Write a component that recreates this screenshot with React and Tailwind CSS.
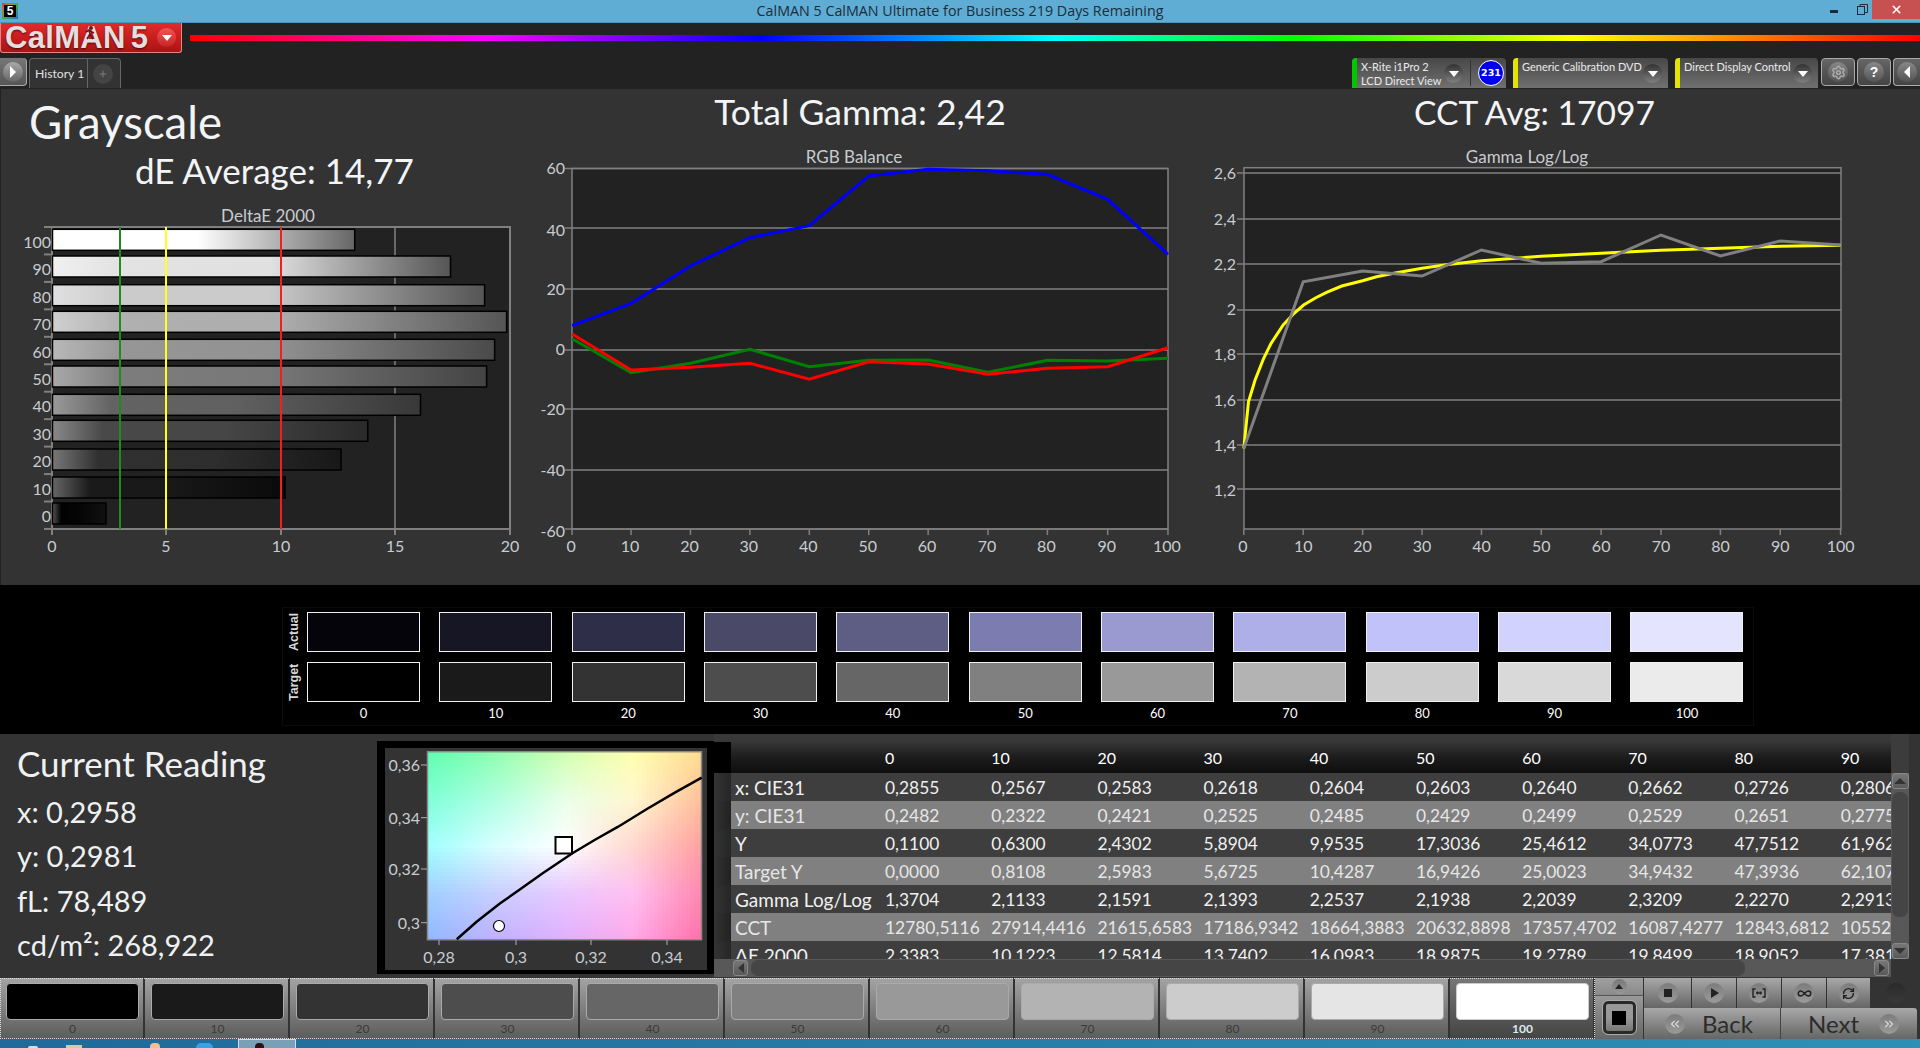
import React from "react";
import { Settings, Infinity as InfinityIcon, RefreshCw, ChevronsLeft, ChevronsRight, Plus, X } from "lucide-react";

const poly = (arr) => arr.map((p) => p.join(",")).join(" ");

const Caret = ({ className = "" }) => (
  <span className={"w-0 h-0 border-l-[5px] border-r-[5px] border-t-[6px] border-l-transparent border-r-transparent border-t-white " + className} />
);

const DropCircle = () => (
  <span className="w-[19px] h-[19px] rounded-full bg-linear-to-b from-[#333] to-[#808080] flex items-center justify-center shrink-0">
    <Caret />
  </span>
);

const TitleBar = () => (
  <div className="h-[23px] bg-[#5fadd5] border-b border-[#4b93b8] flex items-start relative shrink-0">
    <div className="absolute left-[2px] top-[3px] w-[16px] h-[16px] p-[2px] bg-linear-to-br from-[#d33] via-[#4a4] to-[#36c]">
      <div className="w-full h-full bg-black text-white text-[12px] leading-[12px] font-bold text-center font-['Liberation_Sans',sans-serif]">5</div>
    </div>
    <div className="flex-1 text-center text-[14.3px] leading-[22px] text-[#1c2c38] font-['Open_Sans',sans-serif]">
      CalMAN 5 CalMAN Ultimate for Business 219 Days Remaining
    </div>
    <div className="absolute right-[82px] top-[10px] w-[8px] h-[3px] bg-[#1c2c38]" />
    <svg className="absolute right-[52px] top-[4px]" width="11" height="11" viewBox="0 0 11 11" fill="none" stroke="#1c2c38">
      <rect x="0.5" y="2.5" width="7" height="8" />
      <path d="M3 2.5V0.5H10.5V8.5H8" />
    </svg>
    <div className="absolute right-0 top-0 w-[48px] h-[19px] bg-[#c75050] flex items-center justify-center">
      <X size={13} color="#fff" strokeWidth={3} />
    </div>
  </div>
);

const RoundBtn = ({ children }) => (
  <span className="w-[20px] h-[20px] rounded-full bg-linear-to-b from-[#7c7c7c] to-[#9a9a9a] flex items-center justify-center shrink-0">{children}</span>
);

const Header = () => (
  <div className="h-[66px] bg-[#222222] shrink-0 flex flex-col">
    <div className="h-[35px] flex items-start">
      <div className="relative w-[182px] h-[30px] rounded-b-[3px] bg-linear-to-b from-[#e22a2a] to-[#ad1212] border border-t-0 border-[#d88] flex items-center pl-[4px] shrink-0">
        <span className="text-[31px] leading-[28px] font-bold text-[#e4dede] tracking-[0.3px] [text-shadow:0_1px_2px_#0009] font-['Liberation_Sans',sans-serif]">CalMAN</span>
        <span className="ml-[5px] text-[31px] leading-[28px] font-bold text-[#e4dede] [text-shadow:0_1px_2px_#0009] font-['Liberation_Sans',sans-serif]">5</span>
        <svg className="absolute left-[84px] top-[3px]" width="10" height="14" viewBox="0 0 10 14" fill="none" stroke="#7a1010" strokeWidth="1.6">
          <circle cx="6" cy="2" r="1.2" fill="#7a1010" />
          <path d="M1 6L4 4L7 6L9 7M4 4L5 8L2 13M5 8L8 13" />
        </svg>
        <span className="absolute left-[156px] top-[5px] w-[19px] h-[19px] rounded-full bg-linear-to-b from-[#ee5555] to-[#c52222] flex items-center justify-center">
          <Caret />
        </span>
      </div>
      <div className="ml-[8px] mt-[12px] flex-1 h-[6px] bg-[linear-gradient(90deg,#ff0000_0%,#ff00ff_17%,#0000ff_33%,#00ffff_50%,#00ff00_64%,#ffff00_80%,#ff0000_100%)]" />
    </div>
    <div className="h-[31px] flex items-start justify-between">
      <div className="flex">
        <div className="w-[27px] h-[28px] rounded-r-[4px] bg-linear-to-b from-[#777] to-[#555] border-r border-b border-[#aaa] flex items-center justify-center">
          <span className="w-[20px] h-[20px] rounded-full bg-linear-to-b from-[#aaa] to-[#666] flex items-center justify-center">
            <span className="w-0 h-0 border-t-[6px] border-b-[6px] border-l-[6px] border-t-transparent border-b-transparent border-l-white" />
          </span>
        </div>
        <div className="ml-[2px] w-[92px] h-[30px] rounded-t-[4px] bg-[#333] border border-b-0 border-[#666] flex items-center">
          <div className="w-[58px] h-full text-[12.2px] pl-[5px] leading-[30px] text-[#e0e0e0] border-r border-[#666] whitespace-nowrap font-[Lato,sans-serif]">History 1</div>
          <span className="ml-[5px] w-[20px] h-[20px] rounded-full bg-[#444] flex items-center justify-center">
            <Plus size={10} color="#888" />
          </span>
        </div>
      </div>
      <div className="flex items-start">
        <div className="w-[154px] h-[30px] rounded-t-[4px] bg-linear-to-b from-[#484848] to-[#707070] flex overflow-hidden">
          <div className="w-[5px] h-full bg-[#00c800] mr-[4px]" />
          <div className="w-[83px] text-[11px] leading-[14px] pt-[2px] text-[#eaeaea] whitespace-nowrap font-[Lato,sans-serif]">
            <div>X-Rite i1Pro 2</div>
            <div>LCD Direct View</div>
          </div>
          <div className="w-[22px] pt-[6px]"><DropCircle /></div>
          <div className="w-px h-[26px] mt-[2px] bg-[#333] ml-[4px]" />
          <div className="ml-[7px] mt-[2px] w-[26px] h-[26px] rounded-full bg-[#0000f0] border border-white text-white text-[9.5px] font-bold leading-[24px] text-center font-['DejaVu_Sans',sans-serif]">231</div>
        </div>
        <div className="ml-[7px] w-[155px] h-[30px] rounded-t-[4px] bg-linear-to-b from-[#484848] to-[#707070] flex overflow-hidden">
          <div className="w-[5px] h-full bg-[#e4e400] mr-[4px]" />
          <div className="w-[121px] text-[11px] leading-[14px] pt-[2px] text-[#eaeaea] whitespace-nowrap font-[Lato,sans-serif]">Generic Calibration DVD</div>
          <div className="pt-[6px]"><DropCircle /></div>
        </div>
        <div className="ml-[7px] w-[143px] h-[30px] rounded-t-[4px] bg-linear-to-b from-[#484848] to-[#707070] flex overflow-hidden">
          <div className="w-[5px] h-full bg-[#e4e400] mr-[4px]" />
          <div className="w-[109px] text-[11px] leading-[14px] pt-[2px] text-[#eaeaea] whitespace-nowrap font-[Lato,sans-serif]">Direct Display Control</div>
          <div className="pt-[6px]"><DropCircle /></div>
        </div>
        <div className="ml-[3px] w-[34px] h-[28px] rounded-[4px] border border-[#aaa] bg-linear-to-b from-[#666] to-[#444] flex items-center justify-center">
          <span className="w-[20px] h-[20px] rounded-full bg-linear-to-b from-[#888] to-[#555] flex items-center justify-center"><Settings size={15} color="#aaa" strokeWidth={2.4} /></span>
        </div>
        <div className="ml-[2px] w-[34px] h-[28px] rounded-[4px] border border-[#aaa] bg-linear-to-b from-[#666] to-[#444] flex items-center justify-center">
          <span className="w-[20px] h-[20px] rounded-full bg-linear-to-b from-[#888] to-[#555] text-white font-bold text-[14px] leading-[20px] text-center font-['Liberation_Sans',sans-serif]">?</span>
        </div>
        <div className="ml-[2px] w-[27px] h-[28px] rounded-l-[4px] border border-r-0 border-[#aaa] bg-linear-to-b from-[#666] to-[#444] flex items-center justify-center">
          <span className="w-[20px] h-[20px] rounded-full bg-linear-to-b from-[#888] to-[#555] flex items-center justify-center">
            <span className="w-0 h-0 border-t-[6px] border-b-[6px] border-r-[6px] border-t-transparent border-b-transparent border-r-white" />
          </span>
        </div>
      </div>
    </div>
  </div>
);

const LBL = "text-[16px] fill-[#c8ccd0]";
const TTL = "text-[17px] fill-[#c8ccd0]";
const LN = "#808080";

const bars = [
  { l: "100", y: 29.3, end: 354.7, s: ["#ffffff", "#ffffff", "#ffffff", "#666666"], m: 0.48 },
  { l: "90", y: 56, end: 450.5, s: ["#f0f0f0", "#e3e3e3", "#e0e0e0", "#555555"], m: 0.55 },
  { l: "80", y: 84.7, end: 484.6, s: ["#e0e0e0", "#cbcbcb", "#cbcbcb", "#555555"], m: 0.5 },
  { l: "70", y: 111.3, end: 506.6, s: ["#cfcfcf", "#b0b0b0", "#adadad", "#555555"], m: 0.5 },
  { l: "60", y: 139.3, end: 494.6, s: ["#b8b8b8", "#969696", "#929292", "#4a4a4a"], m: 0.5 },
  { l: "50", y: 166, end: 486.6, s: ["#a8a8a8", "#7c7c7c", "#787878", "#444444"], m: 0.5 },
  { l: "40", y: 194.3, end: 420.5, s: ["#999999", "#636363", "#606060", "#383838"], m: 0.5 },
  { l: "30", y: 220.3, end: 367.8, s: ["#888888", "#494949", "#464646", "#2a2a2a"], m: 0.55 },
  { l: "20", y: 249, end: 341, s: ["#777777", "#303030", "#2e2e2e", "#181818"], m: 0.55 },
  { l: "10", y: 277, end: 285, s: ["#666666", "#1a1a1a", "#181818", "#0a0a0a"], m: 0.5 },
  { l: "0", y: 303, end: 106, s: ["#555555", "#020202", "#050505", "#111111"], m: 0.5 },
];

const DeltaChart = () => (
  <svg width="530" height="385" className="block">
    <defs>
      {bars.map((b) => (
        <linearGradient key={b.l} id={"g" + b.l} x1="0" x2="1" y1="0" y2="0">
          <stop offset="0" stopColor={b.s[0]} />
          <stop offset="0.16" stopColor={b.s[1]} />
          <stop offset={b.m} stopColor={b.s[2]} />
          <stop offset="1" stopColor={b.s[3]} />
        </linearGradient>
      ))}
    </defs>
    <text x="268" y="22" textAnchor="middle" className={TTL}>DeltaE 2000</text>
    <rect x="52" y="27" width="458" height="302" fill="#222222" stroke={LN} strokeWidth="2" />
    <line x1="395" x2="395" y1="27" y2="329" stroke={LN} strokeWidth="1.5" />
    {Array.from({ length: 12 }).map((_, i) => (
      <line key={i} x1="44" x2="52" y1={27 + i * 27.45} y2={27 + i * 27.45} stroke={LN} strokeWidth="2" />
    ))}
    {bars.map((b, i) => (
      <g key={b.l}>
        <rect x="52.5" y={b.y} width={b.end - 52.5} height="21" fill={`url(#g${b.l})`} stroke="#000" strokeWidth="1.5" />
        <text x="51" y={48 + i * 27.4} textAnchor="end" className={LBL}>{b.l}</text>
      </g>
    ))}
    <line x1="120" x2="120" y1="27" y2="329" stroke="#1f8a1f" strokeWidth="2" />
    <line x1="166" x2="166" y1="27" y2="329" stroke="#ffff20" strokeWidth="2" />
    <line x1="281" x2="281" y1="27" y2="329" stroke="#f02020" strokeWidth="2" />
    {[["0", 52], ["5", 166], ["10", 281], ["15", 395], ["20", 510]].map(([t, x]) => (
      <g key={t}>
        <line x1={x} x2={x} y1="329" y2="335" stroke={LN} strokeWidth="2" />
        <text x={x} y="352" textAnchor="middle" className={LBL}>{t}</text>
      </g>
    ))}
  </svg>
);

const xs = [97, 233, 370, 507, 644, 781, 918, 1056, 1193, 1332, 1471];
const pl = (ys, px = xs) => poly(ys.map((y, i) => [(px[i] * 0.4337).toFixed(1), (y / 3).toFixed(1)]));

const RgbChart = () => (
  <svg width="660" height="445" className="block">
    <text x="324" y="23" textAnchor="middle" className={TTL}>RGB Balance</text>
    <rect x="42" y="28.5" width="596" height="360.5" fill="#222222" stroke={LN} strokeWidth="1.5" />
    {[["60", 28.5, 29.3], ["40", 88, 90.7], ["20", 149, 150], ["0", 210, 210], ["-20", 269, 270], ["-40", 330, 330.7], ["-60", 389, 391.7]].map(([t, y, c]) => (
      <g key={t}>
        <line x1="35" x2="638" y1={y} y2={y} stroke={LN} strokeWidth="1.5" />
        <text x="35" y={c + 5} textAnchor="end" className={LBL}>{t}</text>
      </g>
    ))}
    {["0", "10", "20", "30", "40", "50", "60", "70", "80", "90", "100"].map((t, i) => (
      <g key={t}>
        <line x1={xs[i] * 0.4337} x2={xs[i] * 0.4337} y1="389" y2="395" stroke={LN} strokeWidth="1.5" />
        <text x={xs[i] * 0.4337 - 1} y="412" textAnchor="middle" className={LBL}>{t}</text>
      </g>
    ))}
    <polyline fill="none" stroke="#0000ff" strokeWidth="3" points={pl([557, 490, 378, 293, 257, 108, 88, 92, 103, 178, 343])} />
    <polyline fill="none" stroke="#008000" strokeWidth="3" points={pl([596, 698, 670, 628, 680, 661, 660, 697, 661, 663, 655])} />
    <polyline fill="none" stroke="#ff0000" strokeWidth="3" points={pl([582, 690, 682, 670, 718, 665, 672, 703, 685, 680, 623])} />
  </svg>
);

const gx = [124, 261, 398, 535, 672, 810, 948, 1086, 1223, 1361, 1500];
const yellow = [[124, 925], [135, 785], [150, 720], [170, 655], [187, 610], [215, 555], [240, 520], [262, 495], [290, 473], [315, 457], [350, 438], [398, 422], [430, 410], [470, 400], [535, 385], [600, 373], [672, 362], [810, 349], [948, 340], [1086, 331], [1223, 325], [1361, 319], [1500, 316]];

const GammaChart = () => (
  <svg width="730" height="445" className="block">
    <text x="337" y="23" textAnchor="middle" className={TTL}>Gamma Log/Log</text>
    <rect x="54" y="27.7" width="597" height="361.3" fill="#222222" stroke={LN} strokeWidth="1.5" />
    {[["2,6", 33, 34.3], ["2,4", 79, 80], ["2,2", 124, 125], ["2", 170, 170], ["1,8", 214, 215], ["1,6", 260, 261], ["1,4", 305, 306], ["1,2", 349, 351.7]].map(([t, y, c]) => (
      <g key={t}>
        <line x1="47" x2="651" y1={y} y2={y} stroke={LN} strokeWidth="1.5" />
        <text x="46" y={c + 4.5} textAnchor="end" className={LBL}>{t}</text>
      </g>
    ))}
    {["0", "10", "20", "30", "40", "50", "60", "70", "80", "90", "100"].map((t, i) => (
      <g key={t}>
        <line x1={gx[i] * 0.4337} x2={gx[i] * 0.4337} y1="389" y2="395" stroke={LN} strokeWidth="1.5" />
        <text x={gx[i] * 0.4337 - (i === 0 ? 1 : 0)} y="412" textAnchor="middle" className={LBL}>{t}</text>
      </g>
    ))}
    <polyline fill="none" stroke="#ffff00" strokeWidth="3" points={poly(yellow.map(([x, y]) => [(x * 0.4337).toFixed(1), (y / 3).toFixed(1)]))} />
    <polyline fill="none" stroke="#808080" strokeWidth="3" points={pl([925, 425, 393, 408, 330, 370, 365, 285, 348, 303, 315], gx)} />
  </svg>
);

const Main = () => (
  <div className="h-[496px] bg-[#333333] shadow-[inset_1px_0_0_#222] shrink-0 flex text-[#f2f4f6] font-[Lato,sans-serif]">
    <div className="w-[530px] flex flex-col">
      <div className="h-[60px] pl-[29px] text-[45.5px] leading-[66px] whitespace-nowrap">Grayscale</div>
      <div className="h-[51px] pl-[135px] text-[35px] leading-[42px] whitespace-nowrap">dE Average: 14,77</div>
      <DeltaChart />
    </div>
    <div className="w-[660px] flex flex-col">
      <div className="h-[51px] text-center text-[35.5px] leading-[46px]">Total Gamma: 2,42</div>
      <RgbChart />
    </div>
    <div className="w-[730px] flex flex-col">
      <div className="h-[51px] pr-[41px] text-center text-[33.6px] leading-[46px]">CCT Avg: 17097</div>
      <GammaChart />
    </div>
  </div>
);

const actual = ["#05040a", "#161625", "#2e2e48", "#4a4a68", "#5e5e85", "#7c7cb0", "#9a9ad0", "#aeaee8", "#c2c2fa", "#d2d2ff", "#e4e4ff"];
const target = ["#000000", "#1a1a1a", "#333333", "#4d4d4d", "#666666", "#808080", "#999999", "#b3b3b3", "#cccccc", "#d9d9d9", "#ebebeb"];
const steps = ["0", "10", "20", "30", "40", "50", "60", "70", "80", "90", "100"];

const SwatchBand = () => (
  <div className="h-[149px] bg-black pl-[282px] pt-[22px] shrink-0">
    <div className="w-[1472px] h-[119px] border border-[#0b0b0b] flex pt-[4px]">
      <div className="w-[24px] flex flex-col items-center">
        <div className="-ml-[2px] h-[40px] flex items-center justify-center [writing-mode:vertical-rl] rotate-180 text-[12.5px] font-bold text-[#d8d8d8] font-['Liberation_Sans',sans-serif]">Actual</div>
        <div className="-ml-[2px] h-[40px] mt-[10px] flex items-center justify-center [writing-mode:vertical-rl] rotate-180 text-[12.5px] font-bold text-[#d8d8d8] font-['Liberation_Sans',sans-serif]">Target</div>
      </div>
      <div className="flex gap-x-[19.35px]">
        {steps.map((s, i) => (
          <div key={s} className="w-[113px] flex flex-col">
            <div className="h-[40px] border-[1.5px] border-[#f0f0f0]" style={{ backgroundColor: actual[i] }} />
            <div className="h-[40px] mt-[10px] border-[1.5px] border-[#f0f0f0]" style={{ backgroundColor: target[i] }} />
            <div className="h-[22px] text-center text-[13px] leading-[22px] text-white font-[Lato,sans-serif]">{s}</div>
          </div>
        ))}
      </div>
    </div>
  </div>
);

const ctrl = [
  [[0x5d, 0xff, 0xb0], [0x90, 0xff, 0xb0], [0xd0, 0xff, 0xb0], [0xff, 0xff, 0xb0], [0xff, 0xdc, 0x90]],
  [[0x80, 0xff, 0xd8], [0xb0, 0xff, 0xe0], [0xe8, 0xff, 0xe8], [0xff, 0xf8, 0xd0], [0xff, 0xc0, 0x98]],
  [[0xa0, 0xff, 0xff], [0xd8, 0xff, 0xff], [0xff, 0xff, 0xff], [0xff, 0xd8, 0xd0], [0xff, 0xa0, 0xa0]],
  [[0xa0, 0xd0, 0xff], [0xc8, 0xd0, 0xff], [0xe8, 0xc8, 0xff], [0xff, 0xc0, 0xf0], [0xff, 0x88, 0xb0]],
  [[0x90, 0xb8, 0xff], [0xc0, 0xb0, 0xff], [0xe0, 0xb0, 0xff], [0xff, 0xa8, 0xe8], [0xff, 0x70, 0xa8]],
];
const mesh = (u, v) => {
  const fx = Math.min(u * 4, 3.999), fy = Math.min(v * 4, 3.999);
  const i = Math.floor(fx), j = Math.floor(fy), a = fx - i, b = fy - j;
  const c = [0, 1, 2].map(
    (k) => ctrl[j][i][k] * (1 - a) * (1 - b) + ctrl[j][i + 1][k] * a * (1 - b) + ctrl[j + 1][i][k] * (1 - a) * b + ctrl[j + 1][i + 1][k] * a * b
  );
  return `rgb(${c.map(Math.round).join(",")})`;
};
const CW = 69, CH = 47;
const cells = [];
for (let j = 0; j < CH; j++) for (let i = 0; i < CW; i++) cells.push([i, j, mesh((i + 0.5) / CW, (j + 0.5) / CH)]);
const curve = [[968, 628], [1010, 575], [1060, 520], [1100, 480], [1150, 430], [1213, 370], [1260, 330], [1310, 290], [1370, 238], [1430, 188], [1487, 143]];
const cx = (p) => +(p * 0.4719 - 385).toFixed(1);
const cy = (p) => +(p / 3 - 18).toFixed(1);

const Cie = () => (
  <div className="mt-[7px] w-[337px] h-[233px] bg-[#333] border-l-[8px] border-r-[7px] border-t-[7px] border-b-[4px] border-black shrink-0">
    <svg width="322" height="222" className="block">
      <g shapeRendering="crispEdges">
        {cells.map(([i, j, c]) => (
          <rect key={i + "-" + j} x={42.5 + (i * 274) / CW} y={3.7 + (j * 188) / CH} width={274 / CW + 0.5} height={188 / CH + 0.5} fill={c} />
        ))}
      </g>
      <rect x="42.5" y="3.7" width="274" height="188" fill="none" stroke="#8a8a8a" strokeWidth="1.5" />
      <polyline fill="none" stroke="#000" strokeWidth="2.5" points={poly(curve.map(([x, y]) => [cx(x), cy(y)]))} />
      <rect x="170.5" y="89" width="16.5" height="16.5" fill="#fff" stroke="#000" strokeWidth="2" />
      <ellipse cx="114" cy="178" rx="5.5" ry="5.5" fill="#fff" stroke="#000" strokeWidth="1.2" />
      {[["0,36", 17], ["0,34", 69.7], ["0,32", 121], ["0,3", 174.7]].map(([t, y]) => (
        <g key={t}>
          <line x1="36" x2="42" y1={y} y2={y} stroke="#b0b0b0" />
          <text x="35" y={y + 6} textAnchor="end" className="text-[16px] fill-[#c8ccd0]">{t}</text>
        </g>
      ))}
      {[["0,28", 54], ["0,3", 131], ["0,32", 206], ["0,34", 282]].map(([t, x]) => (
        <g key={t}>
          <line x1={x} x2={x} y1="192" y2="197" stroke="#b0b0b0" />
          <text x={x} y="215" textAnchor="middle" className="text-[16px] fill-[#c8ccd0]">{t}</text>
        </g>
      ))}
    </svg>
  </div>
);

const rows = [
  ["x: CIE31", "0,2855", "0,2567", "0,2583", "0,2618", "0,2604", "0,2603", "0,2640", "0,2662", "0,2726", "0,2806"],
  ["y: CIE31", "0,2482", "0,2322", "0,2421", "0,2525", "0,2485", "0,2429", "0,2499", "0,2529", "0,2651", "0,2775"],
  ["Y", "0,1100", "0,6300", "2,4302", "5,8904", "9,9535", "17,3036", "25,4612", "34,0773", "47,7512", "61,9623"],
  ["Target Y", "0,0000", "0,8108", "2,5983", "5,6725", "10,4287", "16,9426", "25,0023", "34,9432", "47,3936", "62,1078"],
  ["Gamma Log/Log", "1,3704", "2,1133", "2,1591", "2,1393", "2,2537", "2,1938", "2,2039", "2,3209", "2,2270", "2,2913"],
  ["CCT", "12780,5116", "27914,4416", "21615,6583", "17186,9342", "18664,3883", "20632,8898", "17357,4702", "16087,4277", "12843,6812", "10552,1010"],
  ["ΔE 2000", "2,3383", "10,1223", "12,5814", "13,7402", "16,0983", "18,9875", "19,2789", "19,8499", "18,9052", "17,3810"],
];

const SB = ({ children, className = "" }) => (
  <div className={"rounded-[3px] bg-linear-to-b from-[#777] to-[#5a5a5a] border border-[#888] flex items-center justify-center " + className}>{children}</div>
);

const GRID = "grid grid-cols-[154px_repeat(10,106.2px)] w-[1216px]";

const Table = () => (
  <div className="flex-1 flex min-w-0">
    <div className="w-[1177px] flex flex-col">
      <div className="h-[8px] bg-[#383838]" />
      <div className="h-[217px] flex overflow-hidden">
        <div className="w-[17px] shrink-0 flex flex-col">
          <div className="h-[31px] bg-black shrink-0" />
          {rows.map((r, i) => (
            <div key={r[0]} className={"h-[28px] shrink-0 bg-linear-to-r from-[#333] " + (i % 2 ? "to-[#222]" : "to-[#262626]")} />
          ))}
        </div>
        <div className="w-[1160px] overflow-hidden text-[17.4px] whitespace-nowrap font-[Lato,sans-serif]">
          <div className="h-[31px] bg-linear-to-b from-[#363636] via-[#1c1c1c] via-50% to-[#0e0e0e]">
            <div className={GRID + " h-full items-center text-white text-[16px]"}>
              <div />
              {steps.slice(0, 10).map((s) => <div key={s}>{s}</div>)}
            </div>
          </div>
          {rows.map((r, i) => (
            <div key={r[0]} className={"h-[28px] " + (i % 2 ? "bg-[#808080] text-[#e6e6e6]" : "bg-[#3e3e3e] text-[#f0f0f0]")}>
              <div className={GRID + " h-full items-center pt-[1px]"}>
                {r.map((c, k) => <div key={k} className={k === 0 ? "pl-[4px] text-[19px]" : ""}>{c}</div>)}
              </div>
            </div>
          ))}
        </div>
      </div>
      <div className="h-[19px] bg-[#585858] flex items-center pl-[19px] pr-[2px] border-b border-[#333]">
        <SB className="w-[15px] h-[16px]">
          <span className="w-0 h-0 border-t-[5px] border-b-[5px] border-r-[6px] border-t-transparent border-b-transparent border-r-[#333]" />
        </SB>
        <div className="ml-[3px] w-[994px] h-[16px] rounded-[7px] bg-[#454545]" />
        <div className="flex-1" />
        <SB className="w-[15px] h-[16px]">
          <span className="w-0 h-0 border-t-[5px] border-b-[5px] border-l-[6px] border-t-transparent border-b-transparent border-l-[#333]" />
        </SB>
      </div>
    </div>
    <div className="w-[18px] flex flex-col shrink-0">
      <div className="h-[39px] bg-[#3c3c3c]" />
      <div className="h-[186px] bg-[#585858] flex flex-col items-center">
        <SB className="w-[17px] h-[16px] shrink-0">
          <span className="w-0 h-0 border-l-[6px] border-r-[6px] border-b-[6px] border-l-transparent border-r-transparent border-b-[#333]" />
        </SB>
        <div className="mt-[3px] w-[16px] h-[125px] rounded-[7px] bg-[#454545] shrink-0" />
        <div className="flex-1" />
        <SB className="w-[17px] h-[16px] shrink-0">
          <span className="w-0 h-0 border-l-[6px] border-r-[6px] border-t-[6px] border-l-transparent border-r-transparent border-t-[#333]" />
        </SB>
      </div>
    </div>
  </div>
);

const Lower = () => (
  <div className="h-[244px] bg-[#333333] flex shrink-0 font-[Lato,sans-serif]">
    <div className="w-[377px] pl-[17px] text-[#eef0f2] shrink-0">
      <div className="h-[51px] pt-[9px] text-[35px] leading-[40px] whitespace-nowrap">Current Reading</div>
      <div className="h-[44px] text-[29px] leading-[44px] pt-[5px] whitespace-nowrap">x: 0,2958</div>
      <div className="h-[45px] text-[29px] leading-[44px] pt-[5px] whitespace-nowrap">y: 0,2981</div>
      <div className="h-[44px] text-[29px] leading-[44px] pt-[5px] whitespace-nowrap">fL: 78,489</div>
      <div className="h-[44px] text-[29px] leading-[44px] pt-[5px] whitespace-nowrap">cd/m²: 268,922</div>
    </div>
    <Cie />
    <Table />
  </div>
);

const strip = ["#000000", "#1a1a1a", "#333333", "#4d4d4d", "#666666", "#808080", "#999999", "#b3b3b3", "#cccccc", "#e5e5e5", "#ffffff"];

const CtrlBtn = ({ children, w }) => (
  <div className={"h-[30px] bg-linear-to-b from-[#a8a8a8] to-[#666] border-r border-[#333] flex items-center justify-center " + w}>{children}</div>
);

const Strip = () => (
  <div className="h-[61px] flex shrink-0 bg-[#333]">
    <div className="w-[1595px] flex outline-1 outline-dotted outline-[#ddd] -outline-offset-1 shrink-0">
      {steps.map((s, i) => {
        const sel = i === 10;
        return (
          <div key={s} className={"w-[145px] h-full border-r-2 border-[#333] pl-[6px] pr-[4px] pt-[5px] bg-linear-to-b " + (sel ? "from-[#777] to-[#444]" : "from-[#a4a4a4] to-[#5c5c5c]")}>
            <div className={"w-[133px] h-[37px] rounded-[4px] border " + (sel ? "border-[#ccc]" : "border-[#aaa]")} style={{ backgroundColor: strip[i] }} />
            <div className={"h-[17px] text-center text-[12px] leading-[17px] font-[Lato,sans-serif] " + (sel ? "text-[#dfe8f0] font-bold" : "text-[#3a3a3a]")}>{s}</div>
          </div>
        );
      })}
    </div>
    <div className="w-[49px] flex flex-col border-r border-[#333] shrink-0">
      <div className="h-[18px] bg-linear-to-b from-[#a0a0a0] to-[#8a8a8a] border-b border-[#555] flex items-center justify-center">
        <span className="w-[15px] h-[15px] rounded-full bg-linear-to-b from-[#777] to-[#999] flex items-center justify-center">
          <span className="w-0 h-0 border-l-[4px] border-r-[4px] border-b-[5px] border-l-transparent border-r-transparent border-b-[#222]" />
        </span>
      </div>
      <div className="flex-1 bg-linear-to-b from-[#999] to-[#666] flex items-center justify-center">
        <div className="w-[33px] h-[33px] rounded-[5px] border-[3px] border-[#2a2a2a] bg-linear-to-b from-[#999] via-[#999] via-50% to-[#777] flex items-center justify-center outline-1 outline-[#aaa]">
          <div className="w-[14px] h-[14px] bg-black" />
        </div>
      </div>
    </div>
    <div className="flex-1 flex flex-col">
      <div className="h-[30px] flex">
        <CtrlBtn w="w-[48px]"><RoundBtn><span className="w-[8px] h-[8px] bg-[#222]" /></RoundBtn></CtrlBtn>
        <CtrlBtn w="w-[45px]"><RoundBtn><span className="w-0 h-0 ml-[2px] border-t-[5px] border-b-[5px] border-l-[8px] border-t-transparent border-b-transparent border-l-[#222]" /></RoundBtn></CtrlBtn>
        <CtrlBtn w="w-[45px]">
          <RoundBtn>
            <svg width="14" height="10" viewBox="0 0 14 10" fill="none" stroke="#222" strokeWidth="1.4">
              <path d="M3.5 1H1V9H3.5M10.5 1H13V9H10.5" />
              <circle cx="5.5" cy="5" r="0.7" fill="#222" />
              <circle cx="8.5" cy="5" r="0.7" fill="#222" />
            </svg>
          </RoundBtn>
        </CtrlBtn>
        <CtrlBtn w="w-[45px]"><RoundBtn><InfinityIcon size={15} color="#222" strokeWidth={2.4} /></RoundBtn></CtrlBtn>
        <CtrlBtn w="w-[44px]"><RoundBtn><RefreshCw size={13} color="#222" strokeWidth={2.6} /></RoundBtn></CtrlBtn>
        <div className="flex-1 bg-[#333] flex items-center justify-center">
          <span className="w-[20px] h-[20px] rounded-full bg-linear-to-b from-[#2a2a2a] to-[#3a3a3a]" />
        </div>
      </div>
      <div className="h-[31px] flex pr-[3px] text-[#2c2c2c] text-[24px] font-[Lato,sans-serif]">
        <div className="w-[137px] bg-linear-to-b from-[#a8a8a8] to-[#666] border-r border-[#444] flex items-center pl-[21px]">
          <RoundBtn><ChevronsLeft size={14} color="#ddd" /></RoundBtn>
          <span className="ml-[17px]">Back</span>
        </div>
        <div className="flex-1 bg-linear-to-b from-[#a8a8a8] to-[#666] rounded-tr-[3px] flex items-center pl-[27px]">
          <span>Next</span>
          <span className="ml-[20px]"><RoundBtn><ChevronsRight size={14} color="#ddd" /></RoundBtn></span>
        </div>
      </div>
    </div>
  </div>
);

const Taskbar = () => (
  <div className="h-[9px] bg-linear-to-r from-[#1f6a9a] to-[#2e90b5] flex items-start overflow-hidden shrink-0">
    <span className="ml-[28px] mt-[7px] w-[10px] h-[2px] bg-[#cfe0ee] rounded-t-[3px]" />
    <span className="ml-[28px] mt-[6px] w-[16px] h-[3px] bg-[#e0c890]" />
    <span className="ml-[68px] mt-[4px] w-[10px] h-[5px] bg-[#f0c090] rounded-t-[4px]" />
    <span className="ml-[36px] mt-[4px] w-[17px] h-[5px] bg-[#3aa0e8] rounded-t-[8px]" />
    <span className="ml-[25px] w-[58px] h-[9px] bg-[#7aa0b8] border-t border-l border-r border-[#cde]">
      <span className="block ml-[16px] mt-[3px] w-[9px] h-[5px] bg-[#301018] rounded-t-[4px]" />
    </span>
  </div>
);

export default function App() {
  return (
    <div className="w-[1920px] h-[1048px] flex flex-col overflow-hidden bg-[#222] font-[Lato,sans-serif]">
      <TitleBar />
      <Header />
      <Main />
      <SwatchBand />
      <Lower />
      <Strip />
      <Taskbar />
    </div>
  );
}
